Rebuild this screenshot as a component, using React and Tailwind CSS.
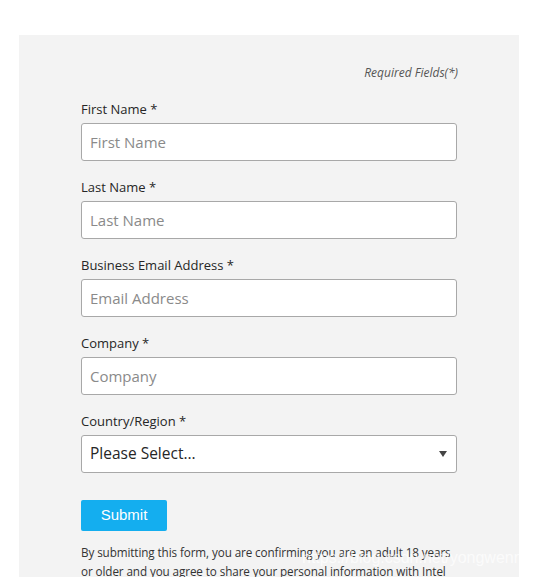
import React from "react";

const fields = [
  { label: "First Name *", ph: "First Name" },
  { label: "Last Name *", ph: "Last Name" },
  { label: "Business Email Address *", ph: "Email Address" },
  { label: "Company *", ph: "Company" },
];

export default function App() {
  return (
    <div className="relative w-[557px] h-[577px] overflow-hidden bg-white" style={{ fontFamily: '"Open Sans", "Noto Sans", sans-serif' }}>
      <div className="ml-[19px] mt-[35px] w-[500px] h-[600px] bg-[#f3f3f3] pl-[62px] pt-[30px]">
        <div className="w-[377px] text-right text-[12px] italic text-[#555] leading-[16px]">Required Fields(*)</div>
        <div className="mt-[19px] flex flex-col">
          {fields.map((f) => (
            <div key={f.label} className="h-[78px]">
              <div className="text-[13px] text-[#262626] leading-[18px]">{f.label}</div>
              <div className="mt-[5px] w-[376px] h-[38px] bg-white border border-[#a8a8a8] rounded-[3px] flex items-center px-[8px] text-[15px] text-[#8a8a8a]">
                {f.ph}
              </div>
            </div>
          ))}
          <div className="h-[78px]">
            <div className="text-[13px] text-[#262626] leading-[18px]">Country/Region *</div>
            <div className="mt-[5px] w-[376px] h-[38px] bg-white border border-[#a8a8a8] rounded-[3px] flex items-center justify-between pl-[8px] pr-[9px] text-[15.5px] text-[#262626]">
              <span>Please Select...</span>
              <svg width="8" height="6" viewBox="0 0 8 6"><path d="M0 0H8L4 6Z" fill="#444" /></svg>
            </div>
          </div>
        </div>
        <button className="mt-[10px] w-[86px] h-[31px] bg-[#14aeef] rounded-[2px] text-white text-[15px]" style={{ fontFamily: '"Liberation Sans", Arial, sans-serif' }}>
          Submit
        </button>
        <p className="mt-[12px] w-[378px] text-[11.7px] tracking-[-0.1px] leading-[19px] text-[#333]">
          By submitting this form, you are confirming you are an adult 18 years or older and you agree to share your personal information with Intel
        </p>
      </div>
      <div className="absolute left-[302px] top-[546px] text-[16px] text-white/70 whitespace-nowrap" style={{ fontFamily: '"Liberation Sans", Arial, sans-serif' }}>
        https://blog.csdn.net/yongwenn163
      </div>
    </div>
  );
}
